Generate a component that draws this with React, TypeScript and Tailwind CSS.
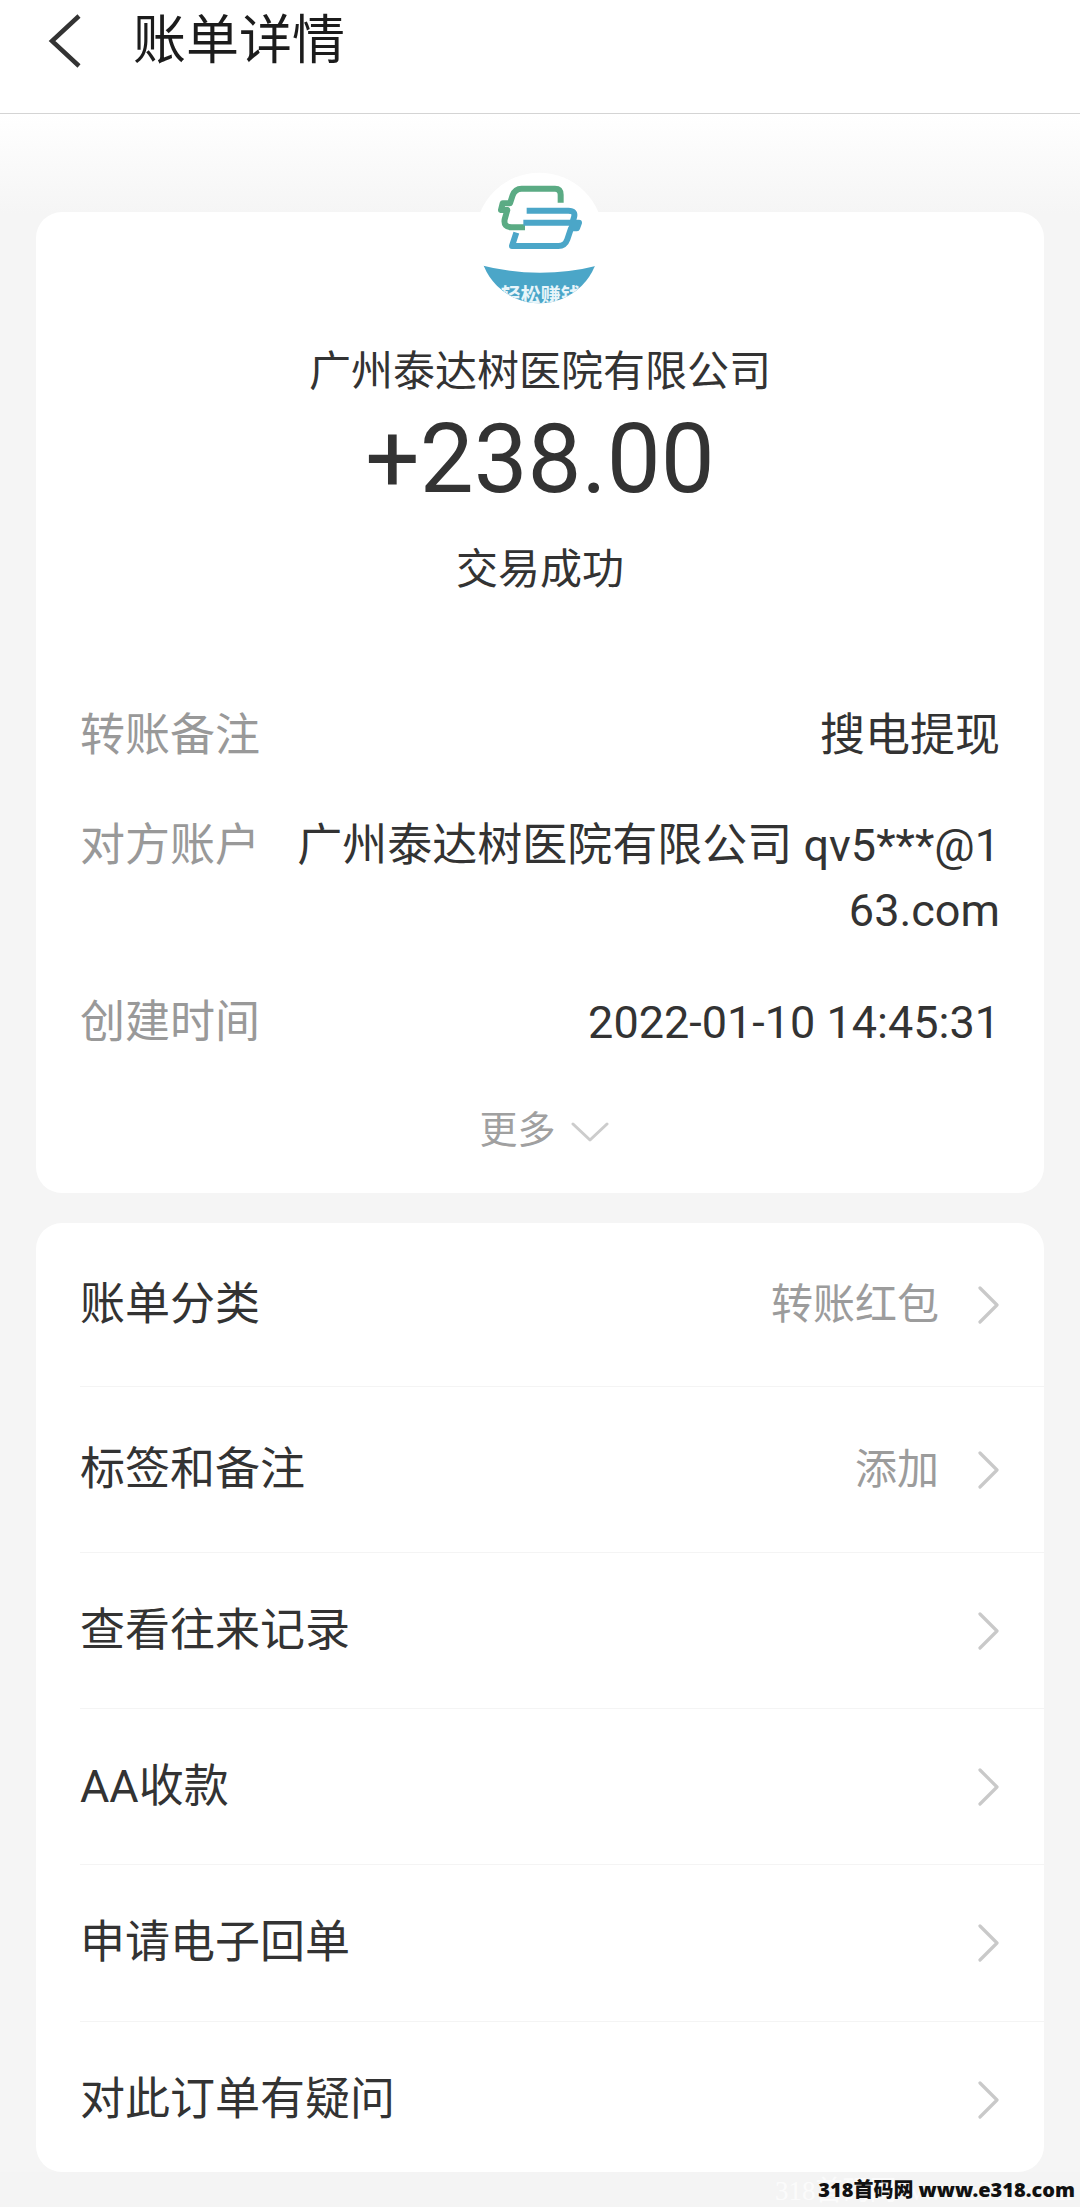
import React from "react";

const FONT = "font-['Roboto','Noto_Sans_CJK_SC',sans-serif]";

function Chevron() {
  return (
    <svg width="22" height="38" viewBox="0 0 22 38" fill="none" className="shrink-0">
      <path d="M2 2 L19 19 L2 36" stroke="#c9c9c9" strokeWidth="3.2" strokeLinecap="round" strokeLinejoin="round" />
    </svg>
  );
}

function Logo() {
  return (
    <svg width="160" height="160" viewBox="120 36 480 480" className="block">
      <defs>
        <clipPath id="lower">
          <circle cx="358" cy="250" r="180" />
        </clipPath>
      </defs>
      <circle cx="358" cy="230" r="192" fill="#ffffff" />
      <g transform="translate(210 60)" fill="none" strokeLinejoin="round">
        <path
          d="M212 68 V44 Q212 26 195 26 H95 Q75 26 68 46 L60 70 H38 L33 90 H52 L44 118 Q40 142 65 142 H105"
          stroke="#5bab84"
          strokeWidth="18"
        />
        <path
          d="M110 92 H235 Q258 92 252 112 L247 128 H267 L261 145 H243 L232 178 Q225 198 205 198 H66 L79 158 M100 128 H247"
          stroke="#4ba6c8"
          strokeWidth="18"
        />
      </g>
      <g clipPath="url(#lower)">
        <path d="M170 312 Q360 364 550 312 V450 H170 Z" fill="#4ba6c8" />
        <text
          x="362"
          y="428"
          textAnchor="middle"
          fill="#e8f5fa"
          fontSize="60"
          fontFamily="'Noto Sans CJK SC', sans-serif"
          fontWeight="700"
        >
          轻松赚钱
        </text>
      </g>
    </svg>
  );
}

function InfoRow({ label, children, className }: { label: string; children: React.ReactNode; className: string }) {
  return (
    <div className={`flex justify-between text-[45px] leading-[65px] ${className}`}>
      <span className="shrink-0 text-[#999999]">{label}</span>
      <span className="w-[704px] break-all text-right text-[#333333]">{children}</span>
    </div>
  );
}

const rows = [
  { label: "账单分类", value: "转账红包", h: "h-[164px]" },
  { label: "标签和备注", value: "添加", h: "h-[166px]" },
  { label: "查看往来记录", value: "", h: "h-[156px]" },
  { label: "AA收款", value: "", h: "h-[156px]" },
  { label: "申请电子回单", value: "", h: "h-[157px]" },
  { label: "对此订单有疑问", value: "", h: "h-[156px]" },
];

export default function App() {
  return (
    <div className={`relative h-[2207px] w-[1080px] overflow-hidden bg-[#f4f4f4] ${FONT}`}>
      <header className="flex h-[114px] items-start border-b border-[#d4d4d4] bg-white">
        <svg width="36" height="56" viewBox="0 0 36 56" fill="none" className="ml-[47px] mt-[13px] shrink-0">
          <path d="M32 3 L5 28 L32 53" stroke="#333333" strokeWidth="4.5" />
        </svg>
        <h1 className="ml-[50px] mt-[6px] text-[53px] font-normal leading-[70px] text-[#1c1c1c]">账单详情</h1>
      </header>

      <main className="bg-[linear-gradient(#ffffff,#f5f5f5_100px)] px-[36px] pt-[98px]">
        <section className="flex h-[981px] flex-col rounded-[26px] bg-white">
          <div className="-mt-[40px] flex justify-center">
            <Logo />
          </div>
          <div className="mt-[10px] text-center">
            <p className="text-[42px] leading-[60px] text-[#333333]">广州泰达树医院有限公司</p>
            <p className="mt-[-3px] text-[96px] leading-[120px] text-[#333333]">+238.00</p>
            <p className="mt-[21px] text-[42px] leading-[60px] text-[#333333]">交易成功</p>
          </div>
          <div className="px-[44px] pt-[103px]">
            <InfoRow label="转账备注" className="">搜电提现</InfoRow>
            <InfoRow label="对方账户" className="mt-[45px]">广州泰达树医院有限公司 qv5***@163.com</InfoRow>
            <InfoRow label="创建时间" className="mt-[47px]">2022-01-10 14:45:31</InfoRow>
          </div>
          <div className="mt-[47px] ml-[8px] flex items-center justify-center gap-[15px] text-[38px] leading-[56px] text-[#a0a0a0]">
            <span>更多</span>
            <svg width="38" height="22" viewBox="0 0 38 22" fill="none" className="mt-[4px]">
              <path d="M2 3 L19 19 L36 3" stroke="#cccccc" strokeWidth="3" strokeLinecap="round" strokeLinejoin="round" />
            </svg>
          </div>
        </section>

        <section className="mt-[30px] h-[949px] overflow-hidden rounded-[26px] bg-white">
          {rows.map((r, i) => (
            <div
              key={r.label}
              className={`ml-[44px] flex items-center justify-between pr-[44px] ${r.h} ${i < 5 ? "border-b border-[#f4f4f4]" : ""}`}
            >
              <span className="text-[45px] text-[#333333]">{r.label}</span>
              <span className="flex items-center gap-[39px]">
                {r.value && <span className="text-[42px] text-[#9c9c9c]">{r.value}</span>}
                <Chevron />
              </span>
            </div>
          ))}
        </section>
      </main>

      <div className="absolute left-[775px] top-[2175px] text-[27px] leading-[32px] whitespace-nowrap text-white/70 font-['Liberation_Serif','Noto_Sans_CJK_SC',serif]">
        318首码网 www.e318.com
      </div>
      <div className="absolute right-[5px] top-[2176px] text-[20px] font-black leading-[28px] whitespace-nowrap text-[#111111] font-['Noto_Sans','Noto_Sans_CJK_SC',sans-serif]">
        318首码网 www.e318.com
      </div>
    </div>
  );
}
